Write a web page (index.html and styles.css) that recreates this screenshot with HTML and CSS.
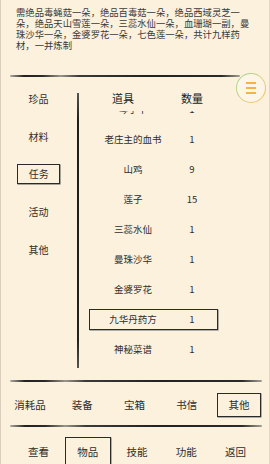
FILE: index.html
```html
<!DOCTYPE html>
<html lang="zh">
<head>
<meta charset="utf-8">
<link rel="stylesheet" href="styles.css">
</head>
<body>
<div class="page">
  <div class="desc"><p class="desc-text">需绝品毒蝇菇一朵，绝品百毒菇一朵，绝品西域灵芝一朵，绝品天山雪莲一朵，三蕊水仙一朵，血珊瑚一副，曼珠沙华一朵，金婆罗花一朵，七色莲一朵，共计九样药材，一并炼制</p></div>
  <div class="rule rule-top"></div>
  <button class="menu-btn" aria-label="菜单"><span></span><span></span><span></span></button>
  <div class="main">
    <div class="side">
      <div class="side-item"><span>珍品</span></div>
      <div class="side-item"><span>材料</span></div>
      <div class="side-item active"><span>任务</span></div>
      <div class="side-item"><span>活动</span></div>
      <div class="side-item"><span>其他</span></div>
    </div>
    <div class="divider"></div>
    <div class="table">
      <div class="thead">
        <span class="th-name">道具</span>
        <span class="th-count">数量</span>
      </div>
      <div class="list">
        <div class="rows">
          <div class="row"><span>琴手丫</span><span>1</span></div>
          <div class="row"><span>老庄主的血书</span><span>1</span></div>
          <div class="row"><span>山鸡</span><span>9</span></div>
          <div class="row"><span>莲子</span><span>15</span></div>
          <div class="row"><span>三蕊水仙</span><span>1</span></div>
          <div class="row"><span>曼珠沙华</span><span>1</span></div>
          <div class="row"><span>金婆罗花</span><span>1</span></div>
          <div class="row selected"><span>九华丹药方</span><span>1</span></div>
          <div class="row"><span>神秘菜谱</span><span>1</span></div>
        </div>
      </div>
    </div>
  </div>
  <div class="rule rule-wide"></div>
  <div class="tabs">
    <div class="tab"><span>消耗品</span></div>
    <div class="tab"><span>装备</span></div>
    <div class="tab"><span>宝箱</span></div>
    <div class="tab"><span>书信</span></div>
    <div class="tab active"><span>其他</span></div>
  </div>
  <div class="rule rule-wide"></div>
  <div class="nav">
    <div class="nav-item"><span>查看</span></div>
    <div class="nav-item active"><span>物品</span></div>
    <div class="nav-item"><span>技能</span></div>
    <div class="nav-item"><span>功能</span></div>
    <div class="nav-item"><span>返回</span></div>
  </div>
</div>
</body>
</html>
```
FILE: styles.css
```css
* { box-sizing: border-box; }
html, body { margin: 0; padding: 0; }
body {
  width: 270px;
  height: 464px;
  overflow: hidden;
  background: #fbf1dd;
  font-family: "Noto Sans CJK SC", "Noto Sans", sans-serif;
  color: #2e2e2e;
}
.page {
  position: relative;
  width: 270px;
  height: 464px;
  overflow: hidden;
  display: flex;
  flex-direction: column;
  box-shadow: inset 1px 0 0 #d9cebb, inset -1px 0 0 #e2d7c4;
}
.desc {
  height: 75px;
  flex: none;
  padding: 7.3px 0 0 16px;
}
.desc-text {
  margin: 0;
  width: 25.5em;
  font-size: 9.33px;
  line-height: 10.8px;
  color: #3a3a3a;
}
.rule {
  flex: none;
  height: 2px;
  border-radius: 1px;
  background: linear-gradient(90deg, rgba(40,40,40,.35) 0%, #222 6%, #2a2a2a 14%, #9a958c 22%, #3a3a3a 30%, #222 60%, #2a2a2a 92%, rgba(40,40,40,.4) 100%);
}
.rule-top { margin: 0 30px 0 10px; }
.rule-wide { margin: 0 8px 0 10px; }
.menu-btn {
  position: absolute;
  left: 236px;
  top: 73px;
  width: 30px;
  height: 30px;
  padding: 0;
  border-radius: 50%;
  border: 1.5px solid transparent;
  background: linear-gradient(#fdf5e6, #fdf5e6) padding-box, linear-gradient(135deg, #a9d58c 20%, #d9cf7a 50%, #f4c26a 80%) border-box;
  display: flex;
  flex-direction: column;
  align-items: center;
  justify-content: center;
  gap: 3.5px;
}
.menu-btn span {
  display: block;
  width: 10px;
  height: 1.5px;
  background: #f2b44a;
}
.main {
  flex: none;
  height: 303px;
  display: flex;
}
.side {
  width: 77px;
  flex: none;
  padding-top: 2.5px;
}
.side-item {
  height: 37.7px;
  display: flex;
  align-items: center;
  justify-content: center;
  font-size: 10px;
  color: #2e2e2e;
}
.side-item.active span {
  width: 43px;
  height: 20px;
  border: 1px solid #2a2a2a;
  box-shadow: 0.5px 0.5px 0 #555;
  display: flex;
  align-items: center;
  justify-content: center;
  margin-left: 0.5px;
}
.divider {
  flex: none;
  width: 2px;
  margin-top: 16px;
  height: 275px;
  background: linear-gradient(180deg, #555, #1e1e1e 10%, #222 90%, #555);
}
.table {
  flex: 1;
  padding-left: 10px;
}
.thead {
  height: 34px;
  padding: 15px 0 0 1px;
  display: grid;
  grid-template-columns: 86px 32px;
  align-items: start;
  font-size: 11px;
  line-height: 12px;
  color: #222;
}
.th-name { text-align: center; padding-right: 20px; }
.th-count { text-align: center; }
.list {
  height: 257px;
  overflow: hidden;
}
.rows {
  display: flex;
  flex-direction: column;
  margin-top: -16.7px;
}
.row {
  flex: none;
  width: 129px;
  height: 21px;
  margin: 4.5px 0;
  border: 1px solid transparent;
  display: grid;
  grid-template-columns: 86px 32px;
  align-items: center;
  font-size: 9.5px;
  line-height: 10px;
  color: #2e2e2e;
}
.row span { text-align: center; }
.row.selected {
  border-color: #2a2a2a;
  box-shadow: 0.5px 0.5px 0 #666;
}
.tabs {
  flex: none;
  height: 43px;
  padding: 2px 5px 0 4px;
  display: grid;
  grid-template-columns: repeat(5, 1fr);
  align-items: center;
  font-size: 10.5px;
}
.tab { display: flex; justify-content: center; }
.tab.active span {
  width: 44px;
  height: 24px;
  border: 1px solid #2a2a2a;
  box-shadow: 0.5px 0.5px 0 #666;
  display: flex;
  align-items: center;
  justify-content: center;
}
.nav {
  flex: none;
  height: 37px;
  padding: 0 10px 0 14px;
  display: grid;
  grid-template-columns: repeat(5, 1fr);
  align-items: start;
  font-size: 10.5px;
}
.nav-item {
  display: flex;
  justify-content: center;
  margin-top: 9.7px;
}
.nav-item span {
  height: 29px;
  display: flex;
  align-items: center;
  justify-content: center;
}
.nav-item.active span {
  width: 46px;
  border: 1px solid #2a2a2a;
  box-shadow: 0.5px 0.5px 0 #666;
}
```
